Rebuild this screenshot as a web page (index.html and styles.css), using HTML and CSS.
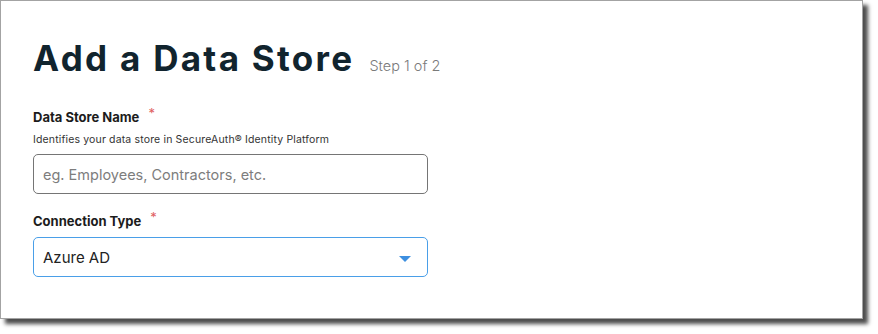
FILE: index.html
```html
<!DOCTYPE html>
<html>
<head>
<meta charset="utf-8">
<link rel="stylesheet" href="styles.css">
</head>
<body>
<div class="card">
  <div class="header">
    <h1 class="title">Add a Data Store</h1>
    <span class="step">Step 1 of 2</span>
  </div>
  <div class="field field-name">
    <div class="label">Data Store Name <span class="req">*</span></div>
    <div class="help">Identifies your data store in SecureAuth® Identity Platform</div>
    <div class="input"><span class="placeholder">eg. Employees, Contractors, etc.</span></div>
  </div>
  <div class="field field-type">
    <div class="label">Connection Type <span class="req">*</span></div>
    <div class="select">
      <span class="value">Azure AD</span>
      <svg class="caret" width="12" height="6" viewBox="0 0 12 6"><path d="M0 0 H12 L6 6 Z" fill="#3d8fe0"/></svg>
    </div>
  </div>
</div>
</body>
</html>
```
FILE: styles.css
```css
html, body {
  margin: 0;
  padding: 0;
  background: #ffffff;
}
body {
  font-family: Inter, "Noto Sans", sans-serif;
  height: 334px;
  overflow: hidden;
}
.card {
  box-sizing: border-box;
  width: 863px;
  height: 319px;
  border: 1px solid #a3a3a3;
  background: #ffffff;
  box-shadow: 5px 5px 4px rgba(0, 0, 0, 0.7);
  padding: 37px 0 0 32px;
}
.header {
  display: flex;
  align-items: baseline;
  gap: 15px;
  height: 40px;
}
.title {
  margin: 0;
  font-size: 35px;
  line-height: 40px;
  font-weight: 700;
  letter-spacing: 2.3px;
  color: #11242e;
}
.step {
  font-size: 14.5px;
  font-weight: 300;
  color: #7a7a7a;
}
.field-name {
  margin-top: 31px;
}
.label {
  font-size: 13px;
  line-height: 16px;
  font-weight: 700;
  color: #1c1c1c;
}
.req {
  color: #e06060;
  font-weight: 400;
  margin-left: 6px;
  position: relative;
  top: -4px;
}
.help {
  margin-top: 8px;
  font-size: 10.5px;
  line-height: 14px;
  letter-spacing: 0.15px;
  color: #333333;
}
.input, .select {
  box-sizing: border-box;
  width: 395px;
  height: 40px;
  border-radius: 5px;
  display: flex;
  align-items: center;
  padding: 0 16px 0 9px;
  font-size: 15px;
}
.input {
  margin-top: 7px;
  border: 1px solid #757575;
}
.placeholder {
  font-size: 14.5px;
  color: #7d7d7d;
}
.field-type {
  margin-top: 19px;
}
.select {
  margin-top: 8px;
  border: 1px solid #4a9fe8;
  justify-content: space-between;
}
.value {
  color: #222222;
}
.caret {
  display: block;
  margin-top: 4px;
}
```
